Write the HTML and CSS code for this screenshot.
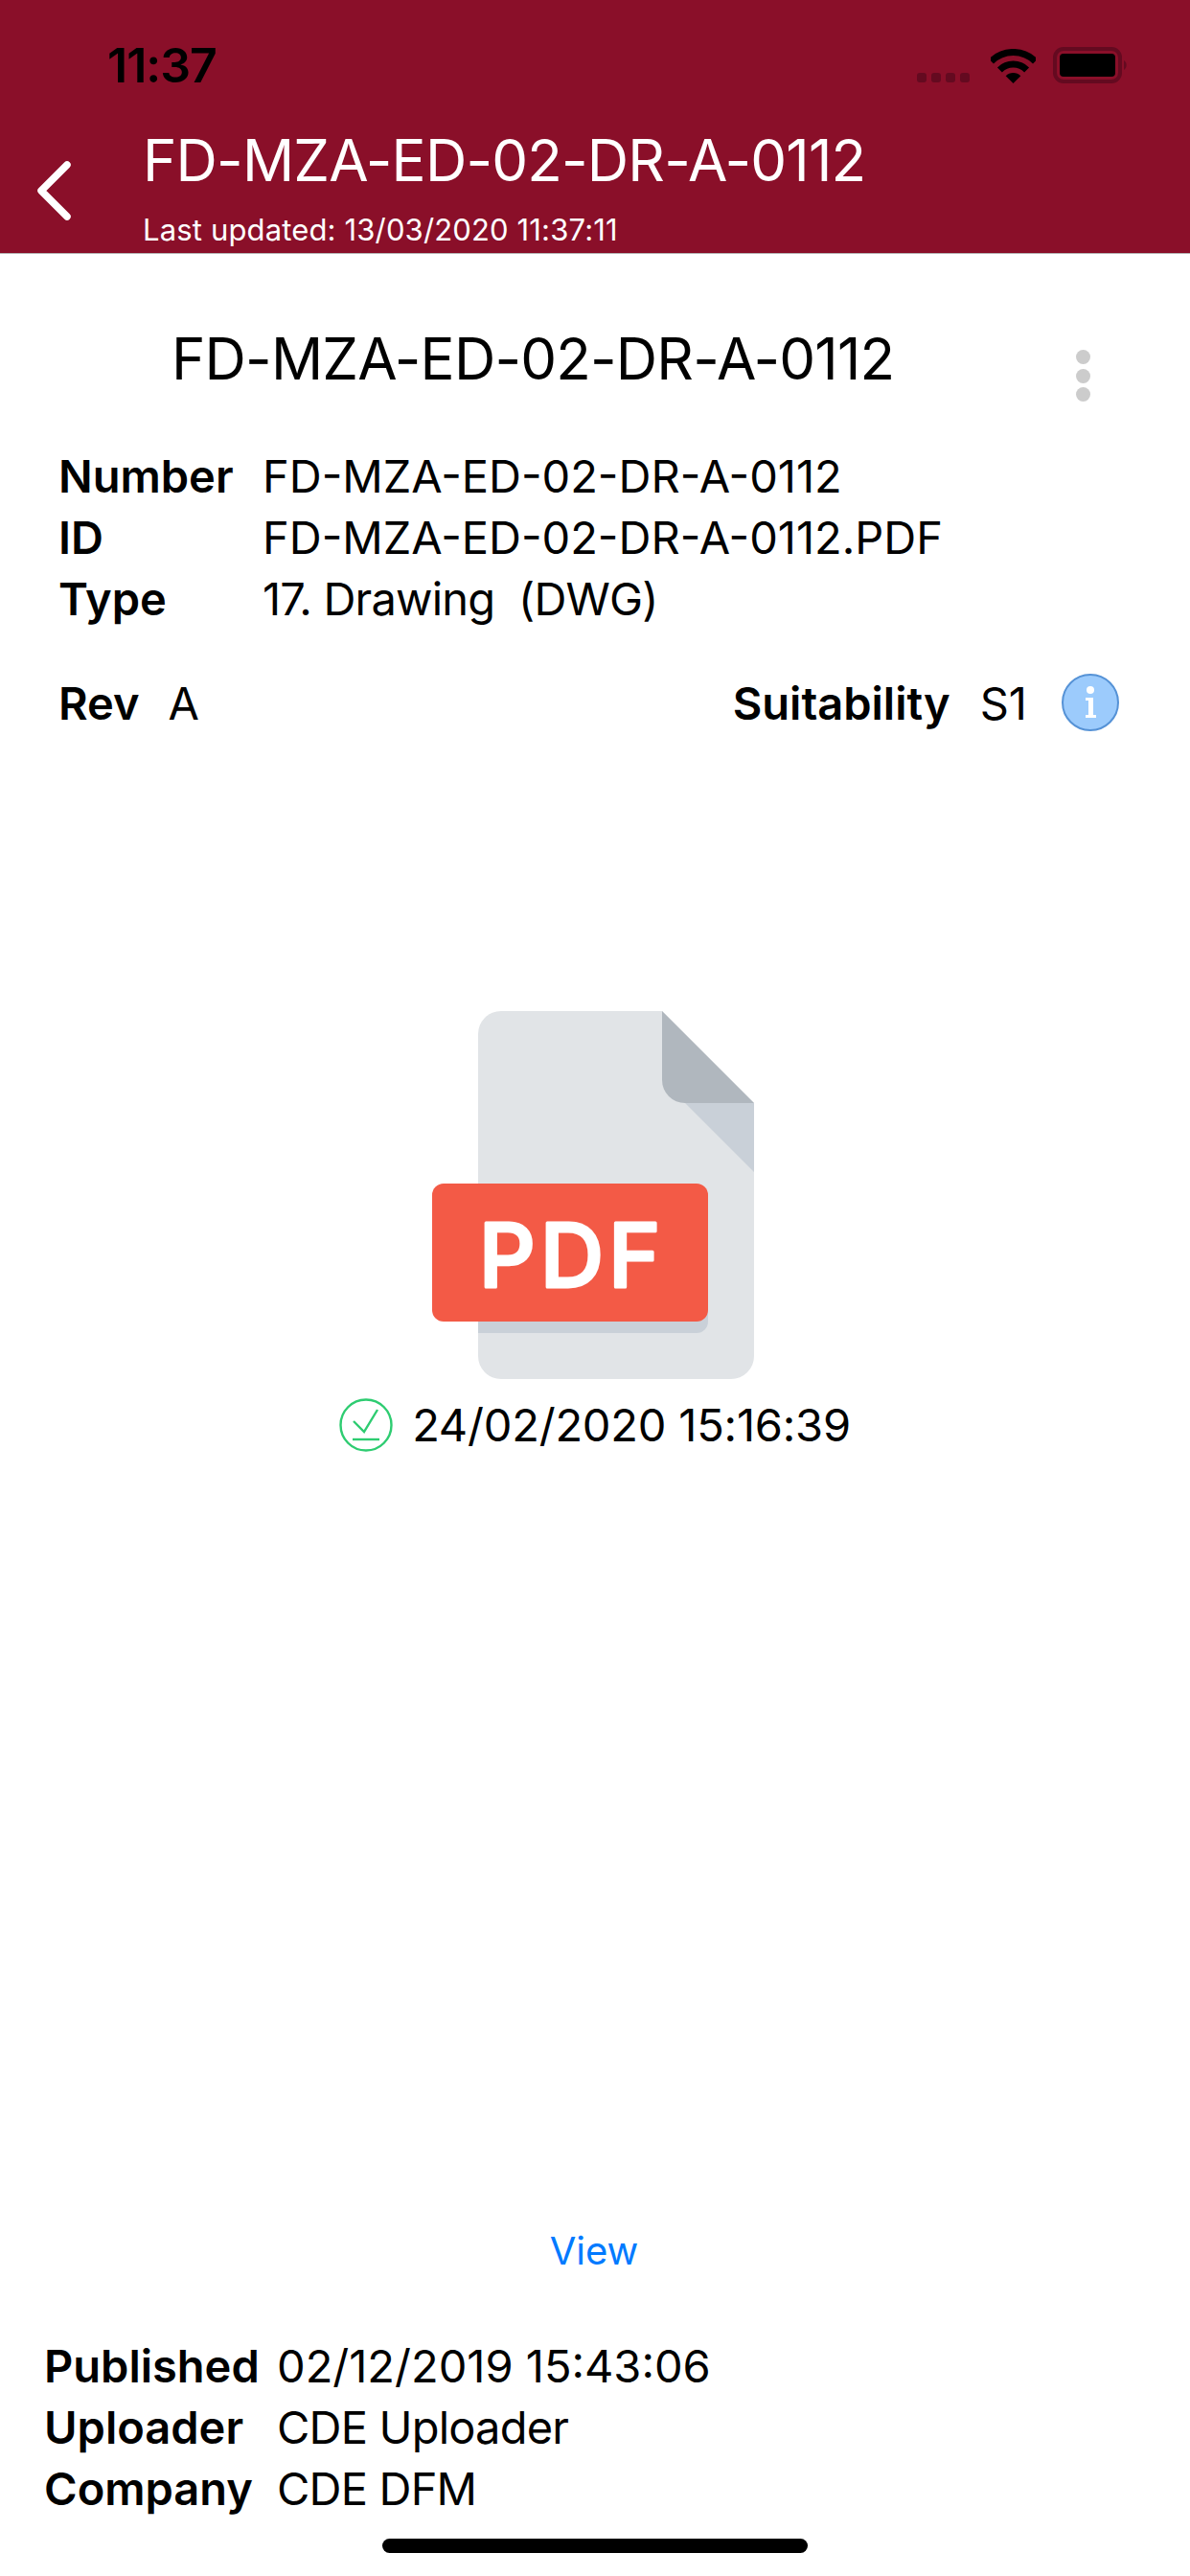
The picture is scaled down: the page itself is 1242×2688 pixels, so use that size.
FILE: index.html
```html
<!DOCTYPE html>
<html lang="en">
<head>
    <meta charset="UTF-8">
    <meta name="viewport" content="width=device-width, initial-scale=1.0">
    <title>FD-MZA-ED-02-DR-A-0112</title>
    <link rel="stylesheet" href="styles.css">
</head>
<body>

<header class="app-header">
    <div class="status-bar">
        <span class="status-time">11:37</span>
        <div class="status-icons">
            <div class="signal-dots"><span></span><span></span><span></span><span></span></div>
            <svg class="wifi-icon" width="47" height="36" viewBox="0 0 47 36">
                <path d="M0.5 13 A32.5 32.5 0 0 1 46.5 13" fill="none" stroke="#000" stroke-width="7"/>
                <path d="M9.4 21.9 A20 20 0 0 1 37.6 21.9" fill="none" stroke="#000" stroke-width="7"/>
                <path d="M23.5 36 L15.7 28.2 A11 11 0 0 1 31.3 28.2 Z" fill="#000"/>
            </svg>
            <svg class="battery-icon" width="80" height="38" viewBox="0 0 80 38">
                <rect x="2" y="2" width="68" height="34" rx="9" fill="none" stroke="#640a20" stroke-width="4"/>
                <rect x="7" y="7" width="58" height="24" rx="4" fill="#000"/>
                <path d="M74 14 A6 6 0 0 1 74 24 Z" fill="#640a20"/>
            </svg>
        </div>
    </div>
    <div class="nav-bar">
        <svg class="back-icon" width="44" height="70" viewBox="0 0 44 70">
            <path d="M38 8 L11 35 L38 62" fill="none" stroke="#fff" stroke-width="7.5" stroke-linecap="round" stroke-linejoin="round"/>
        </svg>
        <div class="nav-titles">
            <div class="nav-title">FD-MZA-ED-02-DR-A-0112</div>
            <div class="nav-subtitle">Last updated: 13/03/2020 11:37:11</div>
        </div>
    </div>
</header>

<main class="content">
    <div class="doc-heading">
        <h1 class="doc-title">FD-MZA-ED-02-DR-A-0112</h1>
        <div class="more-icon"><span></span><span></span><span></span></div>
    </div>

    <div class="info-table">
        <b>Number</b><span>FD-MZA-ED-02-DR-A-0112</span>
        <b>ID</b><span>FD-MZA-ED-02-DR-A-0112.PDF</span>
        <b>Type</b><span class="tight-value">17. Drawing &nbsp;(DWG)</span>
    </div>

    <div class="rev-row">
        <b>Rev</b><span class="rev-value">A</span>
        <b class="suitability-label">Suitability</b><span class="suitability-value">S1</span>
        <svg class="info-icon" width="60" height="60" viewBox="0 0 60 60">
            <circle cx="30" cy="30" r="29" fill="#9ccbfc" stroke="#5592d6" stroke-width="2"/>
            <circle cx="30" cy="17" r="4" fill="#fff"/>
            <path d="M25 25 H33 V43 H36 V46 H25 V43 H28 V28 H25 Z" fill="#fff"/>
        </svg>
    </div>

    <div class="preview">
        <svg class="file-icon" width="336" height="384" viewBox="0 0 336 384">
            <path d="M72 0 H240 L336 96 V360 A24 24 0 0 1 312 384 H72 A24 24 0 0 1 48 360 V24 A24 24 0 0 1 72 0 Z" fill="#e1e4e7"/>
            <path d="M264 96 H336 V168 Z" fill="#c9d0d8"/>
            <path d="M240 0 L336 96 H264 A24 24 0 0 1 240 72 Z" fill="#b0b7be"/>
            <path d="M48 300 H288 V324 A12 12 0 0 1 276 336 H48 Z" fill="#c9d0d8"/>
            <rect x="0" y="180" width="288" height="144" rx="12" fill="#f35a46"/>
            <text class="pdf-label" x="146" y="288" text-anchor="middle">PDF</text>
        </svg>
        <div class="sync-row">
            <svg class="sync-icon" width="56" height="56" viewBox="0 0 56 56">
                <circle cx="28" cy="28" r="26.5" fill="none" stroke="#2ecc71" stroke-width="2.4"/>
                <path d="M15 24 L26 35 L40 12" fill="none" stroke="#2ecc71" stroke-width="2.4"/>
                <path d="M14 43 H42" fill="none" stroke="#2ecc71" stroke-width="2.4"/>
            </svg>
            <span>24/02/2020 15:16:39</span>
        </div>
    </div>

    <a class="view-link" href="#">View</a>

    <div class="info-table meta-table">
        <b>Published</b><span>02/12/2019 15:43:06</span>
        <b>Uploader</b><span class="tight-value">CDE Uploader</span>
        <b>Company</b><span class="tight-value">CDE DFM</span>
    </div>

    <div class="home-bar"></div>
</main>

</body>
</html>
```

FILE: styles.css
```css
* {
    box-sizing: border-box;
}

body {
    font-family: Inter, "Liberation Sans", sans-serif;
    margin: 0;
    padding: 0;
    width: 1242px;
    height: 2688px;
    background-color: #fff;
    color: #000;
    display: flex;
    flex-direction: column;
    overflow: hidden;
}

b {
    font-weight: 600;
}

/* Cabecera */
.app-header {
    height: 265px;
    background-color: #8a0f29;
    border-bottom: 1px solid #b8b8b8;
    color: #fff;
}

.status-bar {
    height: 130px;
    padding: 38px 0 0 112px;
    display: flex;
    justify-content: space-between;
    align-items: flex-start;
}

.status-time {
    font-size: 50px;
    font-weight: 600;
    line-height: 60px;
    color: #000;
    letter-spacing: -1px;
}

.status-icons {
    display: flex;
    align-items: flex-end;
    padding: 11px 63px 0 0;
}

.signal-dots {
    display: flex;
    gap: 5px;
    margin-right: 22px;
    padding-bottom: 1px;
}

.signal-dots span {
    width: 10px;
    height: 10px;
    border-radius: 3px;
    background-color: #640a20;
}

.wifi-icon {
    margin-right: 18px;
}

.nav-bar {
    display: flex;
    align-items: flex-start;
    padding-left: 32px;
}

.back-icon {
    margin: 34px 73px 0 0;
}

.nav-title {
    font-size: 60px;
    line-height: 68px;
    letter-spacing: -0.8px;
    margin-top: 3px;
}

.nav-subtitle {
    font-size: 31px;
    line-height: 36px;
    letter-spacing: 0.15px;
    margin-top: 21px;
}

/* Contenido */
.content {
    flex: 1;
    display: flex;
    flex-direction: column;
}

.doc-heading {
    display: flex;
    align-items: flex-start;
    justify-content: space-between;
    padding: 75px 104px 0 179px;
}

.doc-title {
    font-size: 60px;
    font-weight: 400;
    line-height: 68px;
    letter-spacing: -0.8px;
    margin: 0;
}

.more-icon {
    display: flex;
    flex-direction: column;
    gap: 4.5px;
    margin-top: 25px;
}

.more-icon span {
    width: 15px;
    height: 15px;
    border-radius: 50%;
    background-color: #ccc;
}

.info-table {
    display: grid;
    grid-template-columns: 213px 1fr;
    font-size: 47px;
    line-height: 64px;
    padding: 46px 0 0 61px;
}

.tight-value {
    letter-spacing: -0.8px;
}

.rev-row {
    display: flex;
    align-items: center;
    font-size: 47px;
    height: 64px;
    margin-top: 44px;
    padding: 0 74px 0 61px;
}

.rev-value {
    margin-left: 30px;
}

.suitability-label {
    margin-left: auto;
}

.suitability-value {
    margin-left: 31px;
}

.info-icon {
    margin-left: 36px;
}

.preview {
    display: flex;
    flex-direction: column;
    align-items: center;
    padding-right: 6px;
    margin-top: 290px;
}

.file-icon {
    margin-left: 2px;
}

.pdf-label {
    font-family: Inter, sans-serif;
    font-size: 92px;
    font-weight: 500;
    fill: #fff;
    stroke: #fff;
    stroke-width: 3;
    stroke-linejoin: round;
    letter-spacing: 5px;
}

.sync-row {
    display: flex;
    align-items: center;
    gap: 20px;
    font-size: 47px;
    line-height: 64px;
    letter-spacing: -0.2px;
    margin: 16px 0 0 6px;
}

.view-link {
    align-self: center;
    margin: auto 0 0 -2px;
    font-size: 40px;
    line-height: 48px;
    color: #007aff;
    text-decoration: none;
}

.meta-table {
    grid-template-columns: 243px 1fr;
    padding: 64px 0 0 46px;
}

.home-bar {
    width: 444px;
    height: 15px;
    border-radius: 8px;
    background-color: #000;
    margin: 20px 0 24px 399px;
}
```
